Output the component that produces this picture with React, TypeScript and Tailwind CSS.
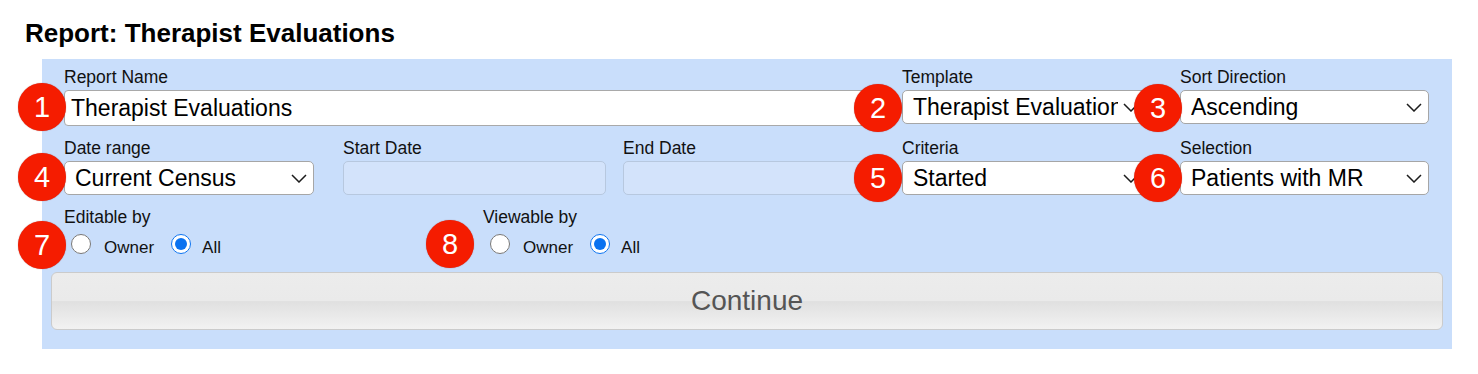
import React from "react";

const font = { fontFamily: '"Liberation Sans", Arial, sans-serif' };

const Chevron = () => (
  <svg width="16" height="9" viewBox="0 0 16 9" fill="none" className="shrink-0">
    <path d="M1 1l7 7 7-7" stroke="#1c1c1c" strokeWidth="1.5" />
  </svg>
);

const Badge = ({ n, className }: { n: number; className: string }) => (
  <div
    className={`absolute w-[48px] h-[48px] rounded-full bg-[#f51c00] text-white text-[29px] flex items-center justify-center leading-none shadow-[0_0_1px_rgba(120,0,0,0.6)] ${className}`}
  >
    {n}
  </div>
);

const Label = ({ children }: { children: React.ReactNode }) => (
  <div className="text-[17.5px] leading-[20px] text-[#111] mb-[3px]">{children}</div>
);

const Select = ({ value, width }: { value: string; width: string }) => (
  <div
    className={`${width} h-[34px] bg-white border border-[#a6a6a6] rounded-[5px] flex items-center pl-[10px] pr-[6px]`}
  >
    <span className="flex-1 overflow-hidden whitespace-nowrap text-[23px] leading-[26px] text-black">
      {value}
    </span>
    <span className="ml-[5px]">
      <Chevron />
    </span>
  </div>
);

const DisabledInput = () => (
  <div className="w-[263px] h-[34px] bg-[#d3e3fb] border border-[#b7c8df] rounded-[5px]" />
);

const Radio = ({ name, checked }: { name: string; checked?: boolean }) => (
  <input
    type="radio"
    name={name}
    defaultChecked={checked}
    className="w-[20px] h-[20px] m-0 accent-[#0a72f0]"
  />
);

const RadioGroup = ({ title, name, className }: { title: string; name: string; className: string }) => (
  <div className={className}>
    <Label>{title}</Label>
    <div className="flex items-center h-[20px] mt-[7px] pl-[7px] text-[17px] leading-[20px] text-[#111]">
      <Radio name={name} />
      <span className="ml-[13px] translate-y-[4px]">Owner</span>
      <span className="ml-[17px] flex">
        <Radio name={name} checked />
      </span>
      <span className="ml-[11px] translate-y-[4px]">All</span>
    </div>
  </div>
);

export default function App() {
  return (
    <div className="bg-white w-[1478px] h-[374px] pt-[19px]" style={font}>
      <h1 className="ml-[25px] text-[26px] leading-[28px] font-bold text-black">
        Report: Therapist Evaluations
      </h1>

      <div className="relative mt-[12px] ml-[42px] w-[1410px] h-[290px] bg-[#c9defb] pt-[8px] pl-[22px]">
        {/* row 1 */}
        <div className="grid grid-cols-[279px_280px_279px_278px_250px] items-start">
          <div className="col-span-3">
            <Label>Report Name</Label>
            <div className="w-[821px] h-[36px] bg-white border border-[#a9a9a9] rounded-[4px] flex items-center pl-[6px] text-[23px] text-black">
              Therapist Evaluations
            </div>
          </div>
          <div>
            <Label>Template</Label>
            <Select value="Therapist Evaluations" width="w-[244px]" />
          </div>
          <div>
            <Label>Sort Direction</Label>
            <Select value="Ascending" width="w-[249px]" />
          </div>
        </div>

        {/* row 2 */}
        <div className="grid grid-cols-[279px_280px_279px_278px_250px] items-start mt-[12px]">
          <div>
            <Label>Date range</Label>
            <Select value="Current Census" width="w-[250px]" />
          </div>
          <div>
            <Label>Start Date</Label>
            <DisabledInput />
          </div>
          <div>
            <Label>End Date</Label>
            <DisabledInput />
          </div>
          <div>
            <Label>Criteria</Label>
            <Select value="Started" width="w-[244px]" />
          </div>
          <div>
            <Label>Selection</Label>
            <Select value="Patients with MR" width="w-[249px]" />
          </div>
        </div>

        {/* row 3 */}
        <div className="flex mt-[12px]">
          <RadioGroup title="Editable by" name="editable" className="w-[419px]" />
          <RadioGroup title="Viewable by" name="viewable" className="" />
        </div>

        <button className="block mt-[18px] -ml-[13px] w-[1392px] h-[58px] rounded-[6px] border border-[#cbcbcb] bg-[linear-gradient(to_bottom,#ececec_0%,#eaeaea_50%,#e0e0e0_51%,#f2f2f2_100%)] text-[28px] text-[#555]">
          Continue
        </button>

        <Badge n={1} className="-left-[24px] top-[24px]" />
        <Badge n={2} className="left-[812px] top-[25px]" />
        <Badge n={3} className="left-[1092px] top-[25px]" />
        <Badge n={4} className="-left-[24px] top-[94px]" />
        <Badge n={5} className="left-[812px] top-[95px]" />
        <Badge n={6} className="left-[1092px] top-[95px]" />
        <Badge n={7} className="-left-[24px] top-[162px]" />
        <Badge n={8} className="left-[384px] top-[161px]" />
      </div>
    </div>
  );
}
